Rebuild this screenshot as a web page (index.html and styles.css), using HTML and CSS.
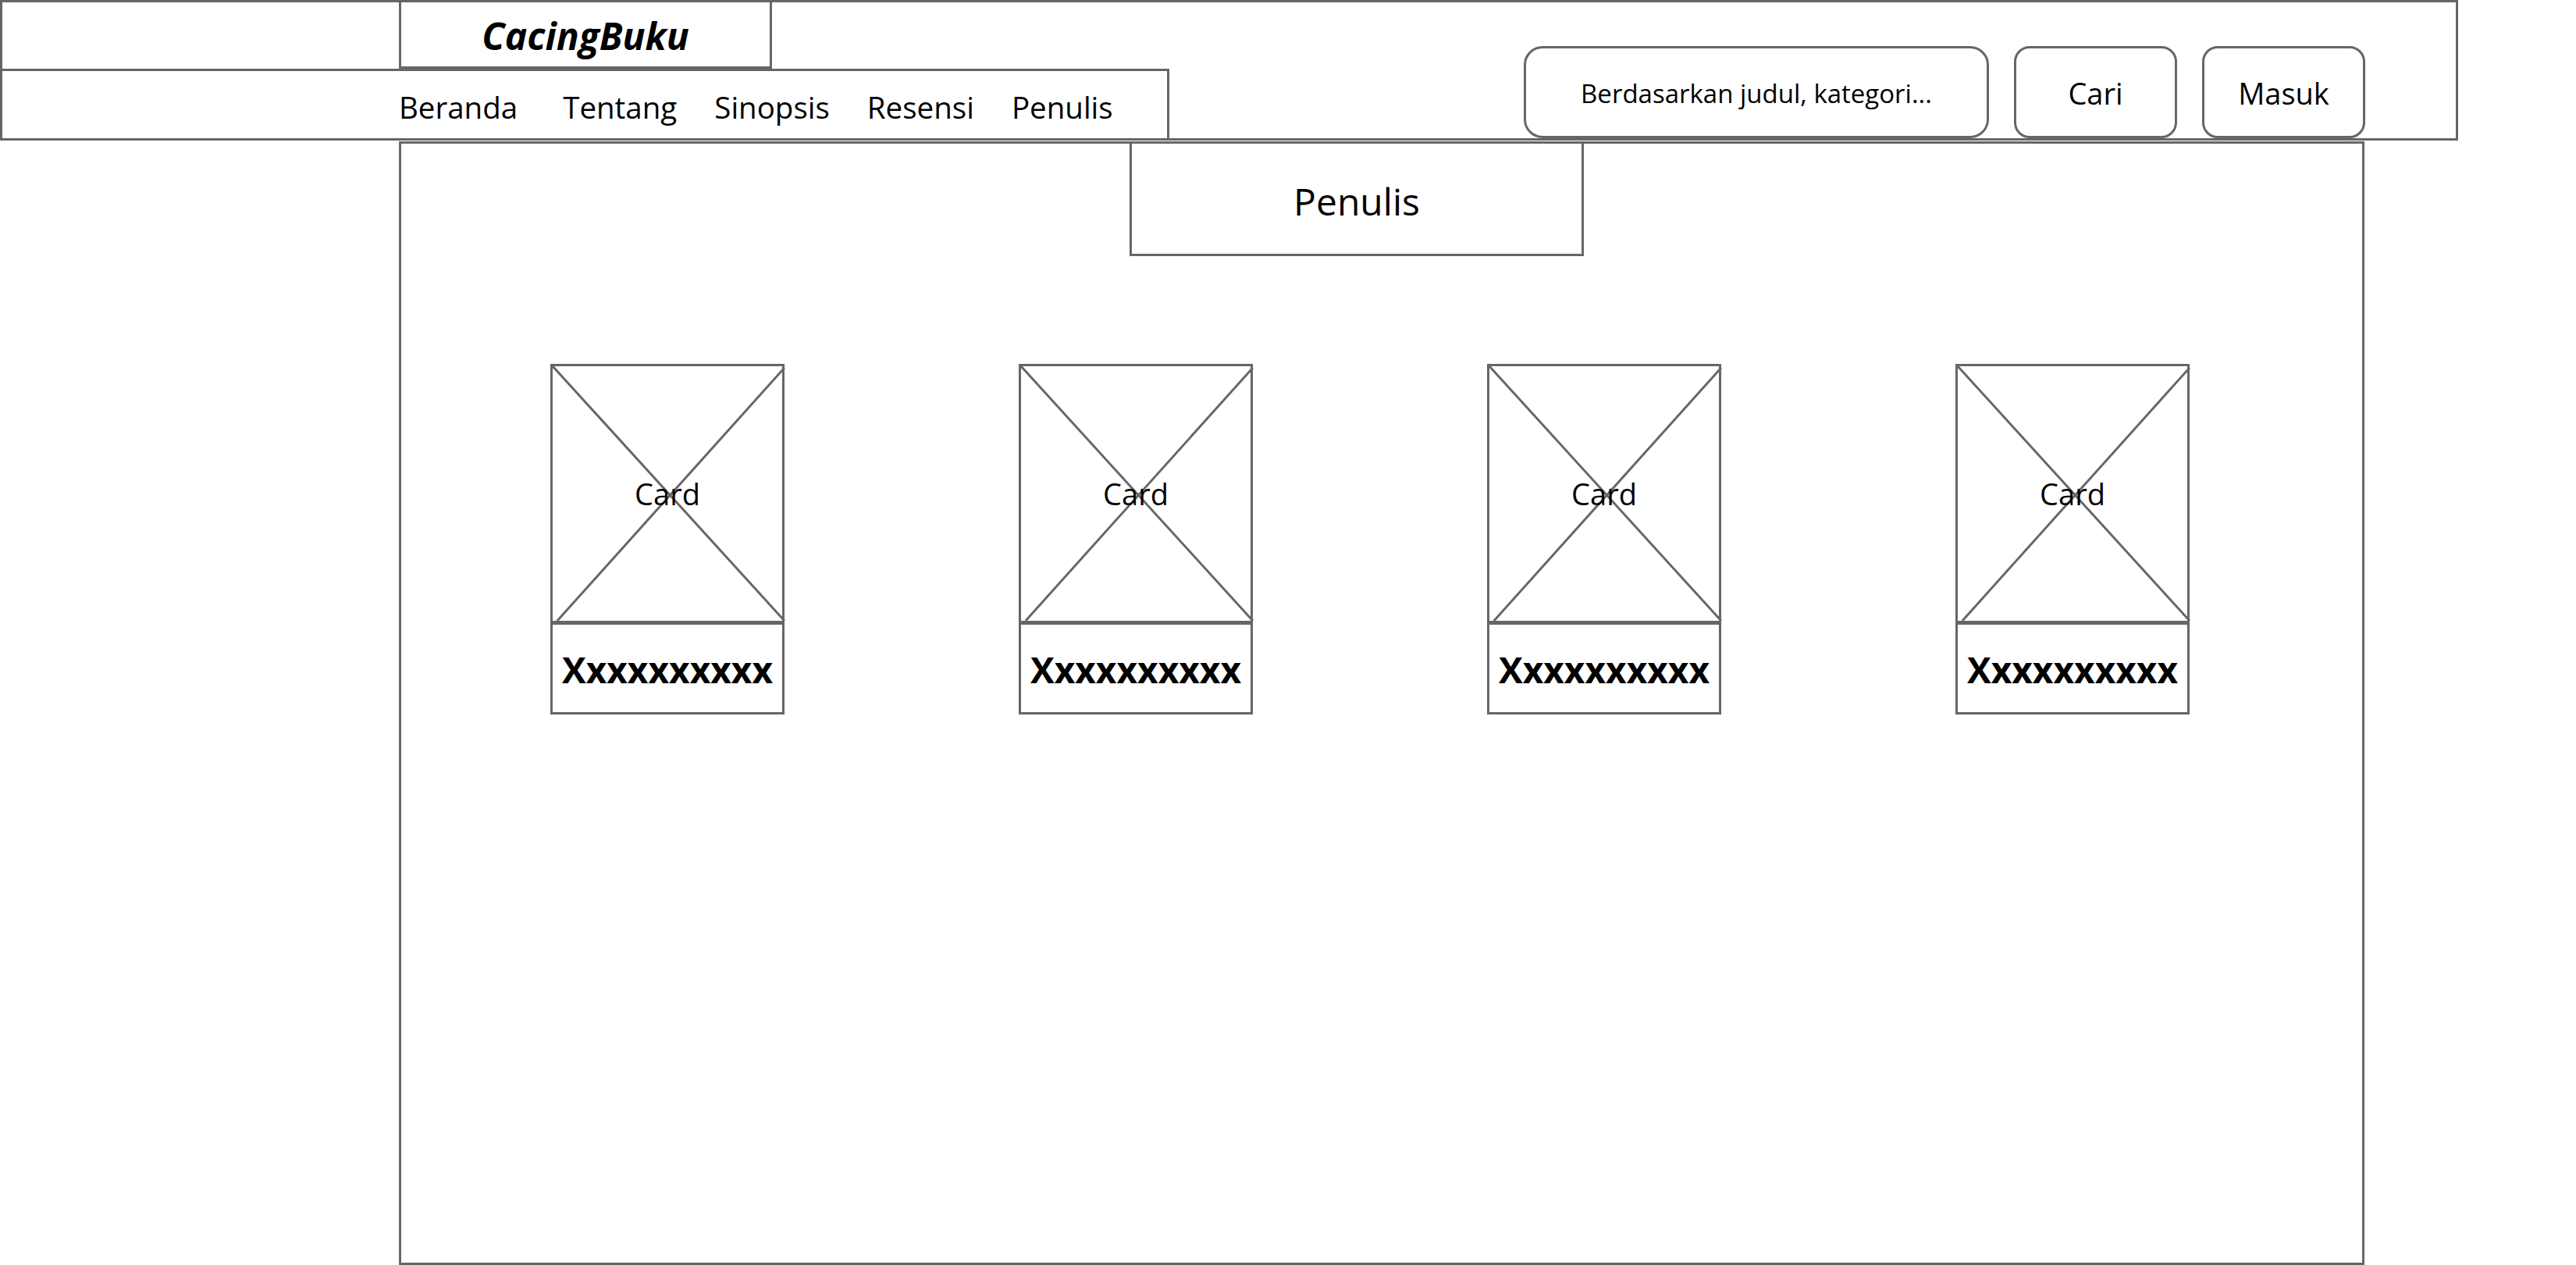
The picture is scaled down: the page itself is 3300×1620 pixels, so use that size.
FILE: index.html
```html
<!DOCTYPE html>
<html lang="id">
<head>
<meta charset="utf-8">
<title>CacingBuku - Penulis</title>
<link rel="stylesheet" href="styles.css">
</head>
<body>

<header class="topbar">
    <div class="brand-col">
        <div class="logo-row">
            <div class="logo">CacingBuku</div>
        </div>
        <nav class="nav">
            <a class="nav-item first" href="#">Beranda</a>
            <a class="nav-item" href="#">Tentang</a>
            <a class="nav-item" href="#">Sinopsis</a>
            <a class="nav-item" href="#">Resensi</a>
            <a class="nav-item" href="#">Penulis</a>
        </nav>
    </div>
    <div class="actions">
        <div class="search">Berdasarkan judul, kategori...</div>
        <button class="btn">Cari</button>
        <button class="btn">Masuk</button>
    </div>
</header>

<main class="content">
    <div class="page-title">Penulis</div>
    <div class="cards">
        <div class="card">
            <div class="card-img">
                <svg class="cross" viewBox="0 0 300 332" preserveAspectRatio="none">
                    <line x1="0" y1="0" x2="303" y2="332"/>
                    <line x1="303" y1="2" x2="6" y2="332"/>
                </svg>
                <span>Card</span>
            </div>
            <div class="card-name">Xxxxxxxxxx</div>
        </div>
        <div class="card">
            <div class="card-img">
                <svg class="cross" viewBox="0 0 300 332" preserveAspectRatio="none">
                    <line x1="0" y1="0" x2="303" y2="332"/>
                    <line x1="303" y1="2" x2="6" y2="332"/>
                </svg>
                <span>Card</span>
            </div>
            <div class="card-name">Xxxxxxxxxx</div>
        </div>
        <div class="card">
            <div class="card-img">
                <svg class="cross" viewBox="0 0 300 332" preserveAspectRatio="none">
                    <line x1="0" y1="0" x2="303" y2="332"/>
                    <line x1="303" y1="2" x2="6" y2="332"/>
                </svg>
                <span>Card</span>
            </div>
            <div class="card-name">Xxxxxxxxxx</div>
        </div>
        <div class="card">
            <div class="card-img">
                <svg class="cross" viewBox="0 0 300 332" preserveAspectRatio="none">
                    <line x1="0" y1="0" x2="303" y2="332"/>
                    <line x1="303" y1="2" x2="6" y2="332"/>
                </svg>
                <span>Card</span>
            </div>
            <div class="card-name">Xxxxxxxxxx</div>
        </div>
    </div>
</main>

</body>
</html>
```

FILE: styles.css
```css
* {
    box-sizing: border-box;
}
body {
    margin: 0;
    background-color: #fff;
    color: #000;
    font-family: "Open Sans", "Noto Sans", sans-serif;
}

/* header */
.topbar {
    width: 3149px;
    height: 180px;
    border: 3px solid #666;
    display: flex;
    align-items: flex-end;
}
.brand-col {
    width: 1495px;
    height: 100%;
    display: flex;
    flex-direction: column;
}
.logo-row {
    height: 85px;
    padding-left: 508px;
}
.logo {
    width: 478px;
    height: 100%;
    border: 3px solid #666;
    border-top: none;
    display: flex;
    align-items: center;
    justify-content: center;
    font-size: 48px;
    font-weight: bold;
    font-style: italic;
    padding-top: 2px;
}
.nav {
    flex: 1;
    border-top: 3px solid #666;
    border-right: 3px solid #666;
    display: flex;
    align-items: center;
    gap: 48px;
    padding-left: 508px;
    padding-top: 6px;
}
.nav-item {
    font-size: 38.5px;
    color: #000;
    text-decoration: none;
}
.nav-item.first {
    margin-right: 10px;
}

.actions {
    margin-left: auto;
    margin-right: 116px;
    display: flex;
    align-items: flex-end;
}
.search {
    width: 596px;
    height: 118px;
    border: 3px solid #666;
    border-radius: 24px;
    display: flex;
    align-items: center;
    justify-content: center;
    font-size: 33px;
    padding-top: 2px;
}
.btn {
    appearance: none;
    -webkit-appearance: none;
    background-color: #fff;
    width: 209px;
    height: 118px;
    border: 3px solid #666;
    border-radius: 20px;
    margin-left: 32px;
    padding: 2px 0 0 0;
    font-family: "Open Sans", "Noto Sans", sans-serif;
    font-size: 38px;
    color: #000;
    cursor: pointer;
}

/* content */
.content {
    margin: 1px 0 0 511px;
    width: 2518px;
    height: 1439px;
    border: 3px solid #666;
}
.page-title {
    margin: -3px 0 0 933px;
    width: 582px;
    height: 147px;
    border: 3px solid #666;
    display: flex;
    align-items: center;
    justify-content: center;
    font-size: 48px;
    padding-top: 5px;
}
.cards {
    display: flex;
    gap: 300px;
    padding-left: 191px;
    margin-top: 138px;
}
.card {
    width: 300px;
}
.card-img {
    position: relative;
    height: 332px;
    border: 3px solid #666;
    display: flex;
    align-items: center;
    justify-content: center;
    font-size: 38px;
}
.card-img span {
    position: relative;
}
.cross {
    position: absolute;
    left: 0;
    top: 0;
    width: 100%;
    height: 100%;
    overflow: visible;
}
.cross line {
    stroke: #666;
    stroke-width: 3;
}
.card-name {
    height: 118px;
    margin-top: -1px;
    border: 3px solid #666;
    display: flex;
    align-items: center;
    justify-content: center;
    font-size: 46px;
    font-weight: bold;
    padding-top: 2px;
}
```
